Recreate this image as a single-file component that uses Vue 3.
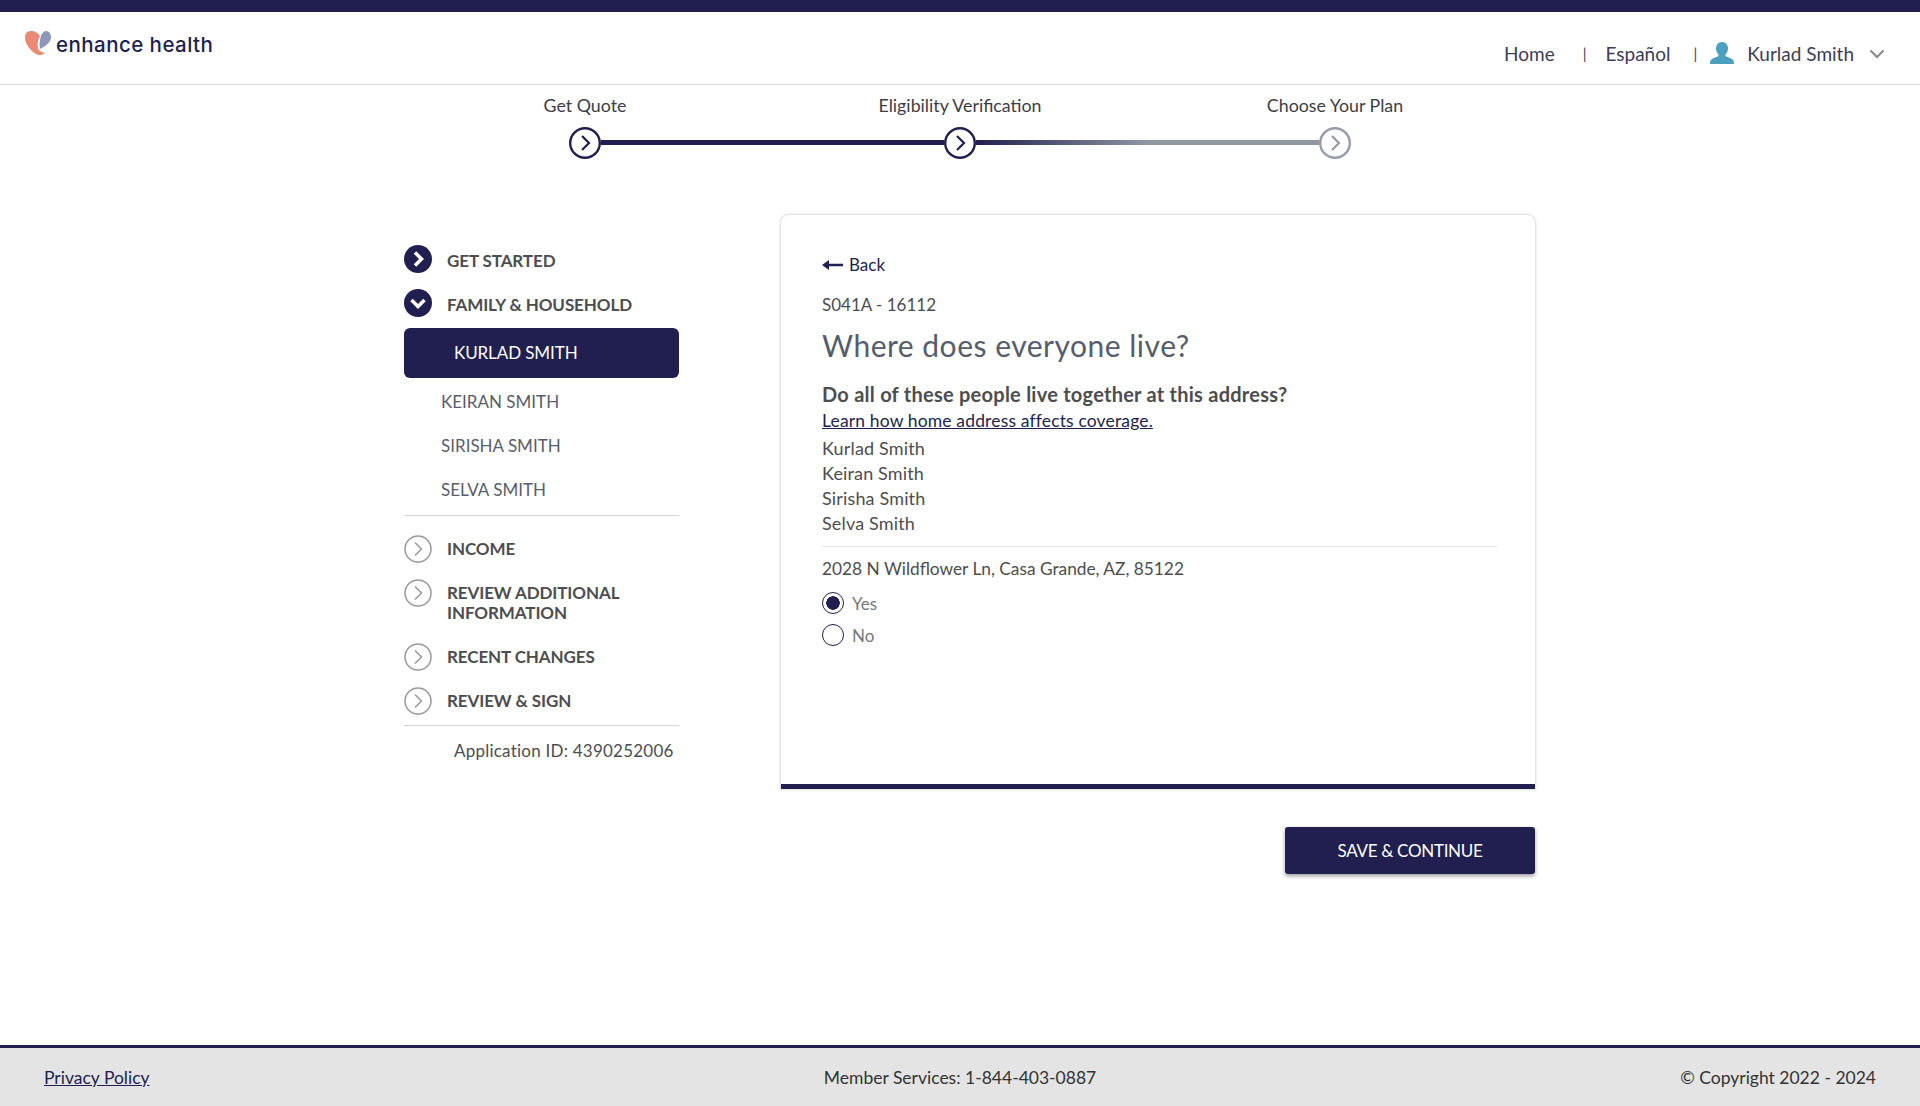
<template>
  <div class="page">
    <header class="topbar">
      <div class="logo">
        <svg class="logo-mark" width="28" height="26" viewBox="0 0 28 26">
          <path d="M0 6C0 2 3 0 6 0c4 0 7 2 9 5-2 4-3 8-2 12 1 3 3 4 7 5-2 2-6 3-9 1C5 19 0 13 0 6z" fill="#e98a75" />
          <path d="M21 0c3 0 5 3 5 6 0 5-5 9-11 12-1-5 0-10 1-13 1-3 3-5 5-5z" fill="#8e97bb" />
        </svg>
        <span class="logo-text">enhance health</span>
      </div>
      <nav class="topnav">
        <a class="nav-home">Home</a>
        <span class="sep">|</span>
        <a class="nav-lang">Español</a>
        <span class="sep sep-two">|</span>
        <svg class="user-icon" width="24" height="22" viewBox="0 0 24 22">
          <path d="M12 0c4 0 6 3 6 6.500 0 2.500-1 4.500-2.500 6v1.500c1 1 7 2 8 4.500.4 1 .5 2.300.5 3.500H0c0-1.200.1-2.500.5-3.500 1-2.500 7-3.500 8-4.500v-1.500C7 11 6 9 6 6.500 6 3 8 0 12 0z" fill="#4ca1bf" />
        </svg>
        <span class="nav-user">Kurlad Smith</span>
        <svg class="caret" width="16" height="10" viewBox="0 0 16 10">
          <path d="M1.500 1.500 8 8l6.500-6.500" fill="none" stroke="#888" stroke-width="2" />
        </svg>
      </nav>
    </header>

    <section class="stepper">
      <div v-for="s in steps" :key="s.label" class="step">
        <span class="step-label">{{ s.label }}</span>
      </div>
    </section>
    <section class="track">
      <span class="dot"><svg width="32" height="32" viewBox="0 0 32 32"><circle cx="16" cy="16" r="14.800" fill="#fff" stroke="#211f50" stroke-width="2.400" /><path d="M13 9l7 7-7 7" fill="none" stroke="#211f50" stroke-width="2.200" /></svg></span>
      <span class="seg seg-done"></span>
      <span class="dot"><svg width="32" height="32" viewBox="0 0 32 32"><circle cx="16" cy="16" r="14.800" fill="#fff" stroke="#211f50" stroke-width="2.400" /><path d="M13 9l7 7-7 7" fill="none" stroke="#211f50" stroke-width="2.200" /></svg></span>
      <span class="seg seg-next"></span>
      <span class="dot"><svg width="32" height="32" viewBox="0 0 32 32"><circle cx="16" cy="16" r="14.800" fill="#fff" stroke="#959ba8" stroke-width="2.400" /><path d="M13 9l7 7-7 7" fill="none" stroke="#959ba8" stroke-width="2.200" /></svg></span>
    </section>

    <main class="content">
      <aside class="sidebar">
        <div class="side-item">
          <svg class="side-icon" width="28" height="28" viewBox="0 0 28 28"><circle cx="14" cy="14" r="14" fill="#211f50" /><path d="M11 7.500l6.500 6.500-6.500 6.500" fill="none" stroke="#fff" stroke-width="3.500" /></svg>
          <span>GET STARTED</span>
        </div>
        <div class="side-item">
          <svg class="side-icon" width="28" height="28" viewBox="0 0 28 28"><circle cx="14" cy="14" r="14" fill="#211f50" /><path d="M7.500 11l6.500 6.500 6.500-6.500" fill="none" stroke="#fff" stroke-width="3.500" /></svg>
          <span>FAMILY &amp; HOUSEHOLD</span>
        </div>
        <div class="person person-active">KURLAD SMITH</div>
        <div v-for="p in people" :key="p" class="person">{{ p }}</div>
        <hr class="side-rule" />
        <div v-for="item in sections" :key="item" class="side-item side-todo">
          <svg class="side-icon" width="28" height="28" viewBox="0 0 28 28"><circle cx="14" cy="14" r="13" fill="none" stroke="#999" stroke-width="1.500" /><path d="M11 7.500l6.500 6.500-6.500 6.500" fill="none" stroke="#999" stroke-width="1.500" /></svg>
          <span>{{ item }}</span>
        </div>
        <hr class="side-rule rule-two" />
        <p class="app-id">Application ID: 4390252006</p>
      </aside>

      <div class="main-col">
        <article class="card">
          <a class="back">
            <svg width="21" height="10" viewBox="0 0 21 10"><path d="M0 5l7-5v3.800h14v2.400H7V10z" fill="#211f50" /></svg>
            Back
          </a>
          <p class="code">S041A - 16112</p>
          <h1 class="title">Where does everyone live?</h1>
          <p class="question">Do all of these people live together at this address?</p>
          <a class="learn">Learn how home address affects coverage.</a>
          <ul class="names">
            <li v-for="n in names" :key="n">{{ n }}</li>
          </ul>
          <hr class="card-rule" />
          <p class="address">2028 N Wildflower Ln, Casa Grande, AZ, 85122</p>
          <div class="radio"><span class="radio-ring radio-on"></span>Yes</div>
          <div class="radio"><span class="radio-ring"></span>No</div>
        </article>
        <div class="actions">
          <button class="save" type="button">SAVE &amp; CONTINUE</button>
        </div>
      </div>
    </main>

    <footer class="footer">
      <a class="privacy">Privacy Policy</a>
      <span>Member Services: 1-844-403-0887</span>
      <span class="copyright">© Copyright 2022 - 2024</span>
    </footer>
  </div>
</template>

<script setup>
const steps = [
  { label: 'Get Quote' },
  { label: 'Eligibility Verification' },
  { label: 'Choose Your Plan' }
]
const people = ['KEIRAN SMITH', 'SIRISHA SMITH', 'SELVA SMITH']
const sections = ['INCOME', 'REVIEW ADDITIONAL INFORMATION', 'RECENT CHANGES', 'REVIEW & SIGN']
const names = ['Kurlad Smith', 'Keiran Smith', 'Sirisha Smith', 'Selva Smith']
</script>

<style>
html, body {
  margin: 0;
  background: #fff;
}
</style>

<style scoped>
.page {
  height: 1106px;
  overflow: hidden;
  display: flex;
  flex-direction: column;
  box-sizing: border-box;
  font-family: "Lato", "Noto Sans", sans-serif;
  font-size: 18px;
  color: #4d4d4f;
}
.topbar {
  height: 72px;
  flex: none;
  border-top: 12px solid #211f50;
  border-bottom: 1px solid #d9d9d9;
  display: flex;
  justify-content: space-between;
  background: #fff;
}
.logo {
  display: flex;
  align-items: flex-start;
  padding: 19px 0 0 25px;
}
.logo-text {
  font-family: "Inter", sans-serif;
  font-size: 20.500px;
  font-weight: 500;
  letter-spacing: 0.45px;
  color: #211f50;
  margin: 0 0 0 3px;
  line-height: 28px;
}
.topnav {
  display: flex;
  align-items: center;
  padding: 24px 35px 0 0;
  height: 34px;
  font-size: 19px;
  color: #3d3d55;
}
.nav-home { margin-right: 28px; }
.nav-lang { margin: 0 23px 0 19px; }
.sep { font-size: 15px; }
.sep-two { margin-right: 13px; }
.nav-user { margin: 0 15px 0 13px; }
.caret { margin-top: 2px; }
.stepper {
  display: flex;
  justify-content: center;
  height: 34px;
  padding-top: 9px;
}
.step {
  width: 375px;
  text-align: center;
  color: #3d3d45;
  font-size: 17.800px;
  line-height: 22px;
}
.track {
  display: flex;
  justify-content: center;
  align-items: center;
  height: 32px;
  margin-top: -1px;
}
.dot {
  width: 32px;
  height: 32px;
  display: block;
}
.seg {
  width: 343px;
  height: 5px;
  display: block;
  margin-top: -2px;
}
.seg-done { background: #211f50; }
.seg-next { background: linear-gradient(90deg, #211f50 0%, #8f97a3 50%, #8f97a3 100%); }
.content {
  flex: 1;
  display: flex;
  padding: 56px 0 0 404px;
  align-items: flex-start;
}
.sidebar {
  width: 275px;
  margin-right: 102px;
  padding-top: 30px;
}
.side-item {
  display: flex;
  align-items: flex-start;
  gap: 15px;
  min-height: 28px;
  margin-bottom: 16px;
  font-weight: 700;
  font-size: 17px;
  letter-spacing: -0.1px;
  line-height: 19px;
  color: #4d4d4f;
}
.side-item span { padding-top: 6px; }
.side-icon { flex: none; }
.side-todo { line-height: 20px; }
.side-todo span { padding: 4px 0; }
.person {
  height: 44px;
  line-height: 44px;
  padding-left: 37px;
  font-size: 17px;
  color: #5a5d6b;
}
.person-active {
  height: 50px;
  line-height: 50px;
  margin: -5px 0 2px;
  padding-left: 50px;
  background: #211f50;
  color: #fff;
  border-radius: 6px;
  letter-spacing: -0.1px;
}
.side-rule {
  border: 0;
  border-top: 1px solid #d5d5d5;
  margin: 3px 0 19px;
}
.rule-two { margin: -6px 0 15px; }
.app-id {
  margin: 0;
  padding-left: 50px;
  font-size: 17px;
  letter-spacing: 0.23px;
  line-height: 20px;
  white-space: nowrap;
}
.main-col { width: 754px; }
.card {
  height: 574px;
  box-sizing: border-box;
  padding: 39px 38px 0 41px;
  background: #fff;
  border-bottom: 5px solid #211f50;
  border-radius: 8px 8px 0 0;
  box-shadow: 0 0 3px rgba(0, 0, 0, 0.3);
}
.back {
  display: flex;
  align-items: center;
  gap: 6px;
  color: #211f50;
  font-size: 17px;
  line-height: 22px;
}
.code {
  margin: 18px 0 0;
  font-size: 17px;
  line-height: 22px;
}
.title {
  margin: 10px 0 0;
  font-size: 30px;
  font-weight: 400;
  line-height: 38px;
  letter-spacing: 0.5px;
  color: #555c6b;
}
.question {
  margin: 18px 0 0;
  font-size: 20px;
  font-weight: 700;
  letter-spacing: 0.25px;
  line-height: 25px;
}
.learn {
  display: block;
  margin-top: 2px;
  font-size: 17.500px;
  letter-spacing: 0.15px;
  line-height: 24px;
  color: #211f50;
  text-decoration: underline;
}
.names {
  list-style: none;
  margin: 3px 0 0;
  padding: 0;
  font-size: 18px;
  letter-spacing: 0.15px;
  line-height: 25px;
}
.card-rule {
  border: 0;
  border-top: 1px solid #e6e6e6;
  margin: 10px 0 0;
}
.address {
  margin: 10px 0 0;
  font-size: 17.300px;
  line-height: 24px;
}
.radio {
  display: flex;
  align-items: center;
  gap: 8px;
  height: 32px;
  font-size: 17px;
  color: #77777a;
}
.radio:first-of-type { margin-top: 6px; }
.radio-ring {
  width: 20px;
  height: 20px;
  border: 1.500px solid #211f50;
  border-radius: 50%;
  box-sizing: content-box;
  display: inline-block;
  background: #fff;
}
.radio-on { background: radial-gradient(circle, #211f50 0 6.500px, #fff 7px); }
.actions {
  display: flex;
  justify-content: flex-end;
  margin-top: 38px;
}
.save {
  width: 250px;
  height: 47px;
  border: 0;
  border-radius: 3px;
  background: #211f50;
  color: #fff;
  font-family: inherit;
  font-size: 17px;
  letter-spacing: -0.3px;
  box-shadow: 0 2px 4px rgba(0, 0, 0, 0.4);
}
.footer {
  height: 61px;
  flex: none;
  box-sizing: border-box;
  border-top: 3px solid #211f50;
  background: #e4e4e4;
  display: grid;
  grid-template-columns: 1fr auto 1fr;
  align-items: center;
  padding: 0 44px;
  color: #333;
  font-size: 17.500px;
}
.privacy {
  color: #211f50;
  text-decoration: underline;
}
.copyright { text-align: right; }
</style>
